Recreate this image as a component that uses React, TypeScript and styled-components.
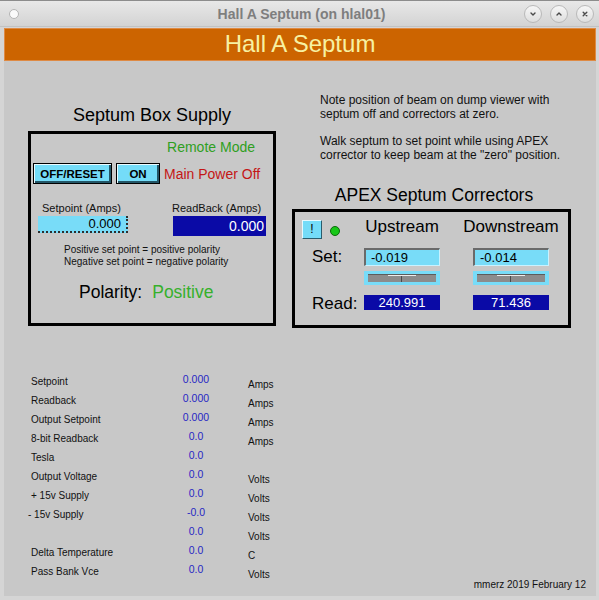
import React from 'react'
import styled, { createGlobalStyle } from 'styled-components'

const GlobalStyle = createGlobalStyle`
  html, body {
    margin: 0;
    padding: 0;
    background: #d5d5d5;
  }
  body {
    font-family: "Liberation Sans", Arial, sans-serif;
    color: #000;
  }
`

interface Reading {
    label: string
    value: string
    unit: string
    shift?: boolean
}

const readings: Reading[] = [
    { label: 'Setpoint', value: '0.000', unit: 'Amps' },
    { label: 'Readback', value: '0.000', unit: 'Amps' },
    { label: 'Output Setpoint', value: '0.000', unit: 'Amps' },
    { label: '8-bit Readback', value: '0.0', unit: 'Amps' },
    { label: 'Tesla', value: '0.0', unit: '' },
    { label: 'Output Voltage', value: '0.0', unit: 'Volts' },
    { label: '+ 15v Supply', value: '0.0', unit: 'Volts' },
    { label: '- 15v Supply', value: '-0.0', unit: 'Volts', shift: true },
    { label: '', value: '0.0', unit: 'Volts' },
    { label: 'Delta Temperature', value: '0.0', unit: 'C' },
    { label: 'Pass Bank Vce', value: '0.0', unit: 'Volts' },
]

const Window = styled.div`
    width: 599px;
    height: 600px;
    display: flex;
    flex-direction: column;
    overflow: hidden;
    background: #d5d5d5;
`

const TitleBar = styled.div`
    height: 27px;
    box-sizing: border-box;
    border-top: 1px solid #8c8c8c;
    border-bottom: 1px solid #c2c2c2;
    background: linear-gradient(#e8e8e8, #d3d3d3);
    display: grid;
    grid-template-columns: 1fr auto 1fr;
    align-items: center;
    padding: 0 5px 0 9px;
`

const WinDot = styled.span`
    width: 8px;
    height: 8px;
    border-radius: 50%;
    background: #fafafa;
    border: 1px solid #b4b4b4;
`

const WinTitle = styled.span`
    font-weight: 700;
    font-size: 14px;
    color: #7e7e7e;
`

const WinButtons = styled.div`
    justify-self: end;
    display: flex;
    gap: 8px;
`

const WinButton = styled.span`
    width: 16px;
    height: 16px;
    border-radius: 50%;
    border: 1px solid #b9b9b9;
    background: linear-gradient(#f6f6f6, #dedede);
    display: flex;
    align-items: center;
    justify-content: center;
`

const Canvas = styled.div`
    flex: 1;
    margin: 1px 3px 4px 4px;
    background: #c8c8c8;
    display: flex;
    flex-direction: column;
`

const Banner = styled.div`
    height: 33px;
    box-sizing: border-box;
    background: #cc6400;
    border: 1px solid #de8a44;
    color: #f7f1a2;
    font-size: 24px;
    line-height: 30px;
    text-align: center;
`

const Upper = styled.div`
    display: grid;
    grid-template-columns: 248px 279px;
    column-gap: 16px;
    margin-left: 24px;
    align-items: start;
`

const LeftCol = styled.div`
    padding-top: 43px;
    display: flex;
    flex-direction: column;
`

const RightCol = styled.div`
    padding-top: 33px;
    display: flex;
    flex-direction: column;
`

const SectionTitle = styled.div<{ $size: number }>`
    font-size: ${p => p.$size}px;
    line-height: 22px;
    text-align: center;
    white-space: nowrap;
`

const SupplyBox = styled.div`
    margin-top: 5px;
    height: 195px;
    box-sizing: border-box;
    border: 3px solid #000;
    display: flex;
    flex-direction: column;
    padding: 5px 0 0 2px;
`

const StatusText = styled.div<{ $color: string }>`
    font-size: 14px;
    line-height: 16px;
    color: ${p => p.$color};
    white-space: nowrap;
`

const RemoteMode = styled(StatusText)`
    align-self: flex-end;
    margin-right: 18px;
`

const ButtonRow = styled.div`
    margin-top: 8px;
    display: flex;
    align-items: center;
    gap: 4px;
`

const CmdButton = styled.button<{ $width: number }>`
    width: ${p => p.$width}px;
    height: 21px;
    box-sizing: border-box;
    padding: 0;
    background: #74dcf8;
    border: 1px solid #000;
    box-shadow: inset 1px 1px 0 #eafbff, inset -2px -2px 0 #235566;
    font-family: "Liberation Sans", Arial, sans-serif;
    font-weight: 700;
    font-size: 11.5px;
    color: #000;
`

const FieldsRow = styled.div`
    margin-top: 17px;
    margin-left: 5px;
    display: flex;
    gap: 45px;
`

const FieldGroup = styled.div`
    display: flex;
    flex-direction: column;
`

const FieldLabel = styled.div<{ $indent: number }>`
    font-size: 11px;
    line-height: 14px;
    margin: 0 0 1px ${p => p.$indent}px;
    white-space: nowrap;
    color: #111;
`

const SetpointField = styled.div`
    width: 90px;
    height: 17px;
    box-sizing: border-box;
    background: #78dcf8;
    border-right: 2px dotted #2e2e2e;
    border-bottom: 2px dotted #2e2e2e;
    font-size: 13px;
    line-height: 16px;
    text-align: right;
    padding-right: 5px;
`

const ReadbackField = styled.div`
    width: 93px;
    height: 20px;
    background: #0a0aa6;
    color: #fff;
    font-size: 14px;
    line-height: 20px;
    text-align: right;
    padding-right: 2px;
    box-sizing: border-box;
`

const PolarityNote = styled.div`
    margin: 8px 0 0 31px;
    font-size: 10px;
    line-height: 12px;
    color: #111;
`

const PolarityRow = styled.div`
    margin: 13px 0 0 46px;
    display: flex;
    gap: 10px;
    font-size: 17.5px;
    line-height: 22px;
`

const PolarityValue = styled.span`
    color: #36b02c;
`

const Note = styled.p`
    margin: 0 0 14px 28px;
    font-size: 12px;
    line-height: 13.5px;
    color: #111;
`

const ApexTitle = styled(SectionTitle)`
    margin-top: 9px;
    line-height: 20px;
    padding-left: 5px;
`

const ApexBox = styled.div`
    margin-top: 4px;
    height: 119px;
    box-sizing: border-box;
    border: 3px solid #000;
    display: grid;
    grid-template-columns: 62px 76px 33px 76px;
    grid-template-rows: 30px 18px 29px 15px;
    align-items: start;
    padding: 6px 0 0 7px;
`

const Cell = styled.div<{ $col: number }>`
    grid-column: ${p => p.$col};
`

const IndicatorCell = styled(Cell)`
    display: flex;
    align-items: center;
    gap: 8px;
    padding-top: 2px;
`

const BangButton = styled.span`
    width: 20px;
    height: 19px;
    box-sizing: border-box;
    background: #74dcf8;
    border: 1px solid;
    border-color: #e6faff #2a5c6c #2a5c6c #e6faff;
    font-size: 12px;
    line-height: 17px;
    text-align: center;
`

const Led = styled.span`
    width: 8px;
    height: 8px;
    border-radius: 50%;
    background: #18c818;
    border: 1px solid #0c6a0c;
    margin-top: 3px;
`

const ColHead = styled(Cell)`
    display: flex;
    justify-content: center;
    font-size: 17px;
    line-height: 17px;
    white-space: nowrap;
`

const RowLabel = styled(Cell)<{ $height: number }>`
    padding-left: 10px;
    font-size: 17px;
    line-height: ${p => p.$height}px;
`

const SetField = styled(Cell)`
    height: 18px;
    box-sizing: border-box;
    background: #78dcf8;
    border-top: 2px solid #6a6a6a;
    border-left: 2px solid #6a6a6a;
    border-bottom: 1px solid #c8f2ff;
    border-right: 1px solid #c8f2ff;
    font-size: 13px;
    line-height: 15px;
    padding-left: 5px;
`

const SliderFrame = styled(Cell)`
    margin-top: 5px;
    height: 14px;
    box-sizing: border-box;
    background: #78dcf8;
    padding: 3px 4px;
`

const Trough = styled.div`
    height: 100%;
    background: #8c8c8c;
    border-top: 1px solid #5c5c5c;
    box-sizing: border-box;
    display: flex;
    justify-content: center;
`

const Thumb = styled.div`
    width: 28px;
    height: 100%;
    border-top: 1px solid #ececec;
    box-sizing: border-box;
    position: relative;

    &::after {
        content: '';
        position: absolute;
        left: 13px;
        top: 0;
        width: 1px;
        height: 100%;
        background: #4a4a4a;
    }
`

const ReadField = styled(Cell)`
    height: 15px;
    background: #0a0aa6;
    color: #fff;
    font-size: 13px;
    line-height: 15px;
    text-align: center;
`

const Bottom = styled.div`
    margin-top: auto;
    padding-bottom: 5px;
    display: flex;
    justify-content: space-between;
    align-items: flex-end;
`

const Table = styled.div`
    margin: 0 0 10px 27px;
    display: grid;
    grid-template-columns: 139px 52px 60px;
    grid-auto-rows: 19px;
    font-size: 10px;
    line-height: 13px;
    color: #111;
`

const TLabel = styled.div<{ $shift?: boolean }>`
    padding-top: 3px;
    margin-left: ${p => (p.$shift ? -3 : 0)}px;
    white-space: nowrap;
`

const TValue = styled.div`
    padding-top: 1px;
    text-align: center;
    color: #2626c4;
    font-size: 10.5px;
`

const TUnit = styled.div`
    padding: 6px 0 0 26px;
`

const Footer = styled.div`
    padding-right: 10px;
    font-size: 10px;
    line-height: 13px;
    color: #111;
`

const Chevron = ({ d }: { d: string }) => (
    <svg width="10" height="10" viewBox="0 0 10 10">
        <path d={d} stroke="#4a4a4a" strokeWidth="1.4" fill="none" strokeLinecap="round" strokeLinejoin="round" />
    </svg>
)

const App: React.FC = () => {
    return (
        <>
            <GlobalStyle />
            <Window>
                <TitleBar>
                    <WinDot />
                    <WinTitle>Hall A Septum (on hlal01)</WinTitle>
                    <WinButtons>
                        <WinButton><Chevron d="M3 4 L5 6 L7 4" /></WinButton>
                        <WinButton><Chevron d="M3 6 L5 4 L7 6" /></WinButton>
                        <WinButton><Chevron d="M3.2 3.2 L6.8 6.8 M6.8 3.2 L3.2 6.8" /></WinButton>
                    </WinButtons>
                </TitleBar>
                <Canvas>
                    <Banner>Hall A Septum</Banner>
                    <Upper>
                        <LeftCol>
                            <SectionTitle $size={18}>Septum Box Supply</SectionTitle>
                            <SupplyBox>
                                <RemoteMode $color="#2f9f22">Remote Mode</RemoteMode>
                                <ButtonRow>
                                    <CmdButton $width={79}>OFF/RESET</CmdButton>
                                    <CmdButton $width={44}>ON</CmdButton>
                                    <StatusText $color="#c41616">Main Power Off</StatusText>
                                </ButtonRow>
                                <FieldsRow>
                                    <FieldGroup>
                                        <FieldLabel $indent={4}>Setpoint (Amps)</FieldLabel>
                                        <SetpointField>0.000</SetpointField>
                                    </FieldGroup>
                                    <FieldGroup>
                                        <FieldLabel $indent={-1}>ReadBack (Amps)</FieldLabel>
                                        <ReadbackField>0.000</ReadbackField>
                                    </FieldGroup>
                                </FieldsRow>
                                <PolarityNote>
                                    Positive set point = positive polarity<br />
                                    Negative set point = negative polarity
                                </PolarityNote>
                                <PolarityRow>
                                    <span>Polarity:</span>
                                    <PolarityValue>Positive</PolarityValue>
                                </PolarityRow>
                            </SupplyBox>
                        </LeftCol>
                        <RightCol>
                            <Note>
                                Note position of beam on dump viewer with<br />
                                septum off and correctors at zero.
                            </Note>
                            <Note>
                                Walk septum to set point while using APEX<br />
                                corrector to keep beam at the "zero" position.
                            </Note>
                            <ApexTitle $size={17.5}>APEX Septum Correctors</ApexTitle>
                            <ApexBox>
                                <IndicatorCell $col={1}>
                                    <BangButton>!</BangButton>
                                    <Led />
                                </IndicatorCell>
                                <ColHead $col={2}>Upstream</ColHead>
                                <ColHead $col={4}>Downstream</ColHead>

                                <RowLabel $col={1} $height={18}>Set:</RowLabel>
                                <SetField $col={2}>-0.019</SetField>
                                <SetField $col={4}>-0.014</SetField>

                                <SliderFrame $col={2}><Trough><Thumb /></Trough></SliderFrame>
                                <SliderFrame $col={4}><Trough><Thumb /></Trough></SliderFrame>

                                <RowLabel $col={1} $height={17}>Read:</RowLabel>
                                <ReadField $col={2}>240.991</ReadField>
                                <ReadField $col={4}>71.436</ReadField>
                            </ApexBox>
                        </RightCol>
                    </Upper>
                    <Bottom>
                        <Table>
                            {readings.map((r, i) => (
                                <React.Fragment key={i}>
                                    <TLabel $shift={r.shift}>{r.label}</TLabel>
                                    <TValue>{r.value}</TValue>
                                    <TUnit>{r.unit}</TUnit>
                                </React.Fragment>
                            ))}
                        </Table>
                        <Footer>mmerz 2019 February 12</Footer>
                    </Bottom>
                </Canvas>
            </Window>
        </>
    )
}

export default App
